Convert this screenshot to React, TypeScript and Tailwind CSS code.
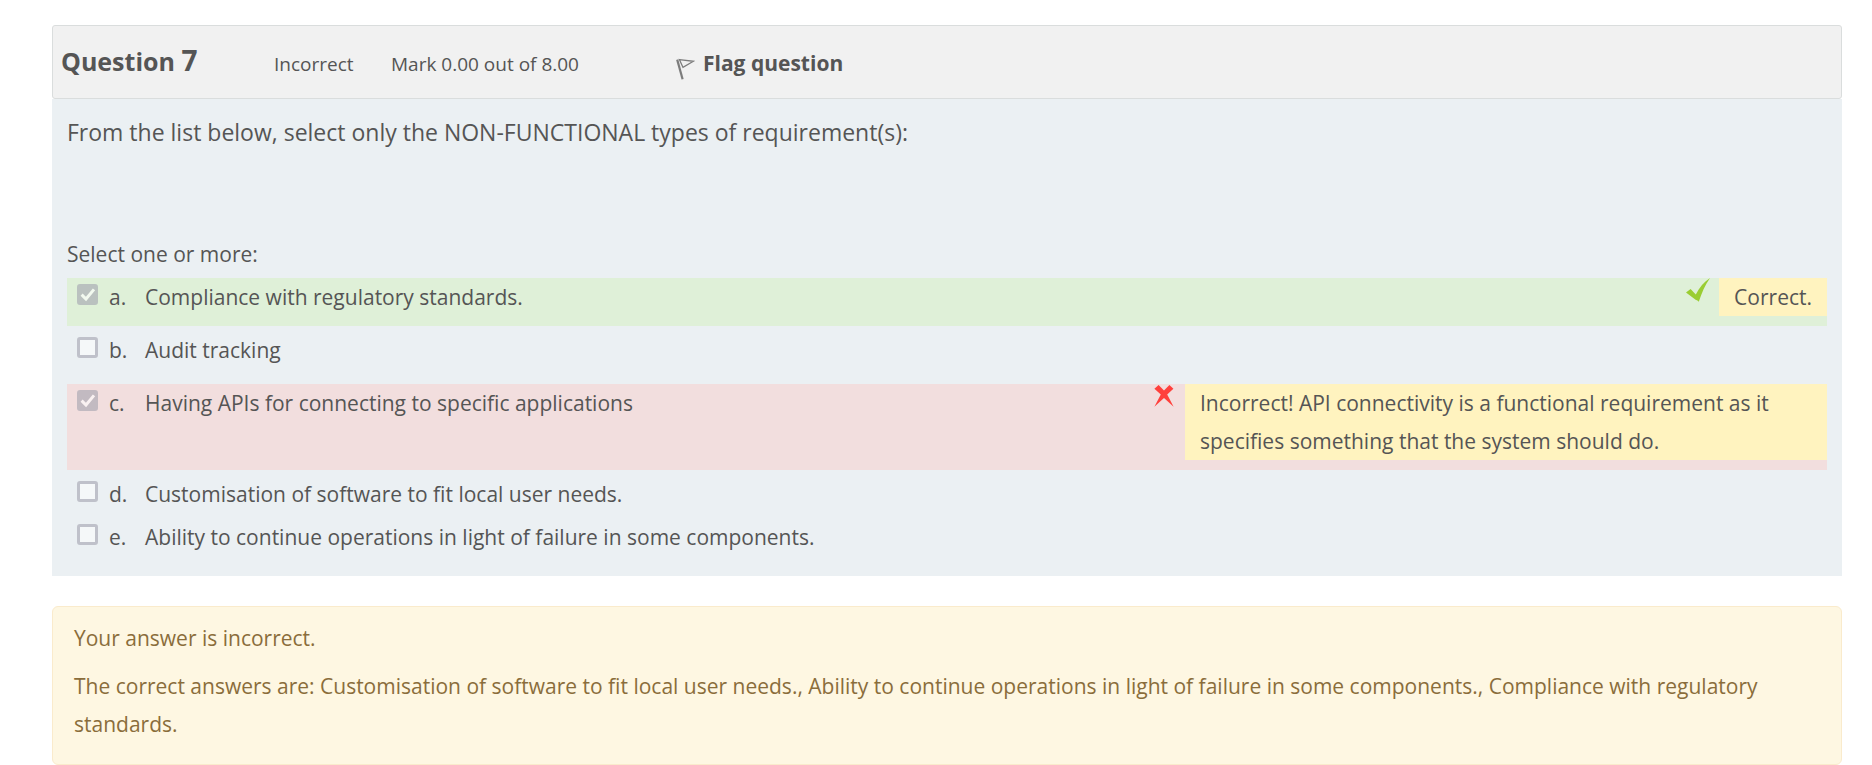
type Feedback = { correct: boolean; text: string };
type Choice = { letter: string; text: string; checked: boolean; roomy: boolean; feedback?: Feedback };

const choices: Choice[] = [
  {
    letter: "a.",
    text: "Compliance with regulatory standards.",
    checked: true,
    roomy: true,
    feedback: { correct: true, text: "Correct." },
  },
  { letter: "b.", text: "Audit tracking", checked: false, roomy: true },
  {
    letter: "c.",
    text: "Having APIs for connecting to specific applications",
    checked: true,
    roomy: true,
    feedback: {
      correct: false,
      text: "Incorrect! API connectivity is a functional requirement as it specifies something that the system should do.",
    },
  },
  { letter: "d.", text: "Customisation of software to fit local user needs.", checked: false, roomy: false },
  {
    letter: "e.",
    text: "Ability to continue operations in light of failure in some components.",
    checked: false,
    roomy: false,
  },
];

function FlagIcon() {
  return (
    <svg viewBox="0 0 20 24" className="h-6 w-5" fill="none" aria-hidden="true">
      <path d="M2.2 2.6 7.6 22.2" stroke="#7c7c7c" strokeWidth="2.2" />
      <path d="M4.4 2.6 18.4 4.3 8 10.4Z" stroke="#7c7c7c" strokeWidth="1.3" />
    </svg>
  );
}

function TickIcon() {
  return (
    <svg viewBox="0 0 24 24" className="h-6 w-6 shrink-0" role="img" aria-label="Correct">
      <path d="M0 14.4 4.6 11 9.8 16.6C13.4 9.6 18 3.8 24 0 19 7.4 15.6 15 12.8 23.8Q11.6 22.4 9.6 21.8Z" fill="#9acd32" />
    </svg>
  );
}

function CrossIcon() {
  return (
    <svg viewBox="0 0 24 24" className="h-6 w-6 shrink-0" role="img" aria-label="Incorrect">
      <path
        d="M2.4 4.8 6.6 1 12 6.4 17.4 1 21.4 4.8 15.2 10.6 21.6 22.8 12 14 2.4 22.8 8.8 10.6Z"
        fill="#ff403c"
      />
    </svg>
  );
}

function Checkbox({ id, checked }: { id: string; checked: boolean }) {
  return (
    <span className="mt-1.5 grid h-[21px] w-[21px] shrink-0 place-items-center opacity-60">
      <input
        id={id}
        type="checkbox"
        checked={checked}
        disabled
        readOnly
        className="col-start-1 row-start-1 h-[21px] w-[21px] appearance-none rounded-[3px] border-3 border-[#a3a3af] bg-white/90 checked:bg-[#a3a3af]"
      />
      {checked && (
        <svg viewBox="0 0 21 21" className="col-start-1 row-start-1 h-[21px] w-[21px]" fill="none" aria-hidden="true">
          <path d="M4.6 10.6 9 15 17 5.4" stroke="#fff" strokeWidth="3" />
        </svg>
      )}
    </span>
  );
}

function ChoiceRow({ choice }: { choice: Choice }) {
  const id = `choice-${choice.letter.charAt(0)}`;
  const tone = choice.feedback ? (choice.feedback.correct ? "bg-[#dff0d8]" : "bg-[#f2dede]") : "";
  return (
    <div className={`flex items-start pl-2.5 ${choice.roomy ? "pb-2.5" : ""} ${tone}`}>
      <Checkbox id={id} checked={choice.checked} />
      <label htmlFor={id} className="ml-[11px] flex flex-1">
        <span className="w-9 shrink-0">{choice.letter}</span>
        <span>{choice.text}</span>
      </label>
      {choice.feedback && (
        <>
          {choice.feedback.correct ? <TickIcon /> : <CrossIcon />}
          <div className="ml-[9px] max-w-[642px] bg-[#fff3bf] px-[15px]">{choice.feedback.text}</div>
        </>
      )}
    </div>
  );
}

export default function App() {
  return (
    <main className="pt-[25px] pr-[30px] pl-[52px] font-['Open_Sans',sans-serif] text-[21px] leading-[38px] text-[#555]">
      <header className="flex h-[74px] items-baseline rounded-[3px] border border-[#dadddd] bg-[#f1f1f1] pt-[15px] pl-2">
        <h3 className="w-[213px] text-[25px] font-bold">
          Question <span className="text-[28px]">7</span>
        </h3>
        <div className="w-[117px] text-[19px]">Incorrect</div>
        <div className="w-[284px] text-[19px]">Mark 0.00 out of 8.00</div>
        <a href="#flag" className="flex items-baseline gap-2 font-bold">
          <span className="translate-y-2.5">
            <FlagIcon />
          </span>
          Flag question
        </a>
      </header>

      <section className="bg-[#ebf0f3] px-[15px] pt-3 pb-5">
        <p className="text-[23px] leading-[42px]">
          From the list below, select only the NON-FUNCTIONAL types of requirement(s):
        </p>
        <fieldset className="mt-[82px]">
          <legend className="mb-[5px]">Select one or more:</legend>
          <div className="flex flex-col gap-[5px]">
            {choices.map((choice) => (
              <ChoiceRow key={choice.letter} choice={choice} />
            ))}
          </div>
        </fieldset>
      </section>

      <section className="mt-[30px] rounded-md border border-[#faebcc] bg-[#fef7e2] px-[21px] pt-3 pb-[21px] text-[#8a6d3b]">
        <p>Your answer is incorrect.</p>
        <p className="mt-2.5">
          The correct answers are: Customisation of software to fit local user needs., Ability to continue operations in
          light of failure in some components., Compliance with regulatory standards.
        </p>
      </section>
    </main>
  );
}
